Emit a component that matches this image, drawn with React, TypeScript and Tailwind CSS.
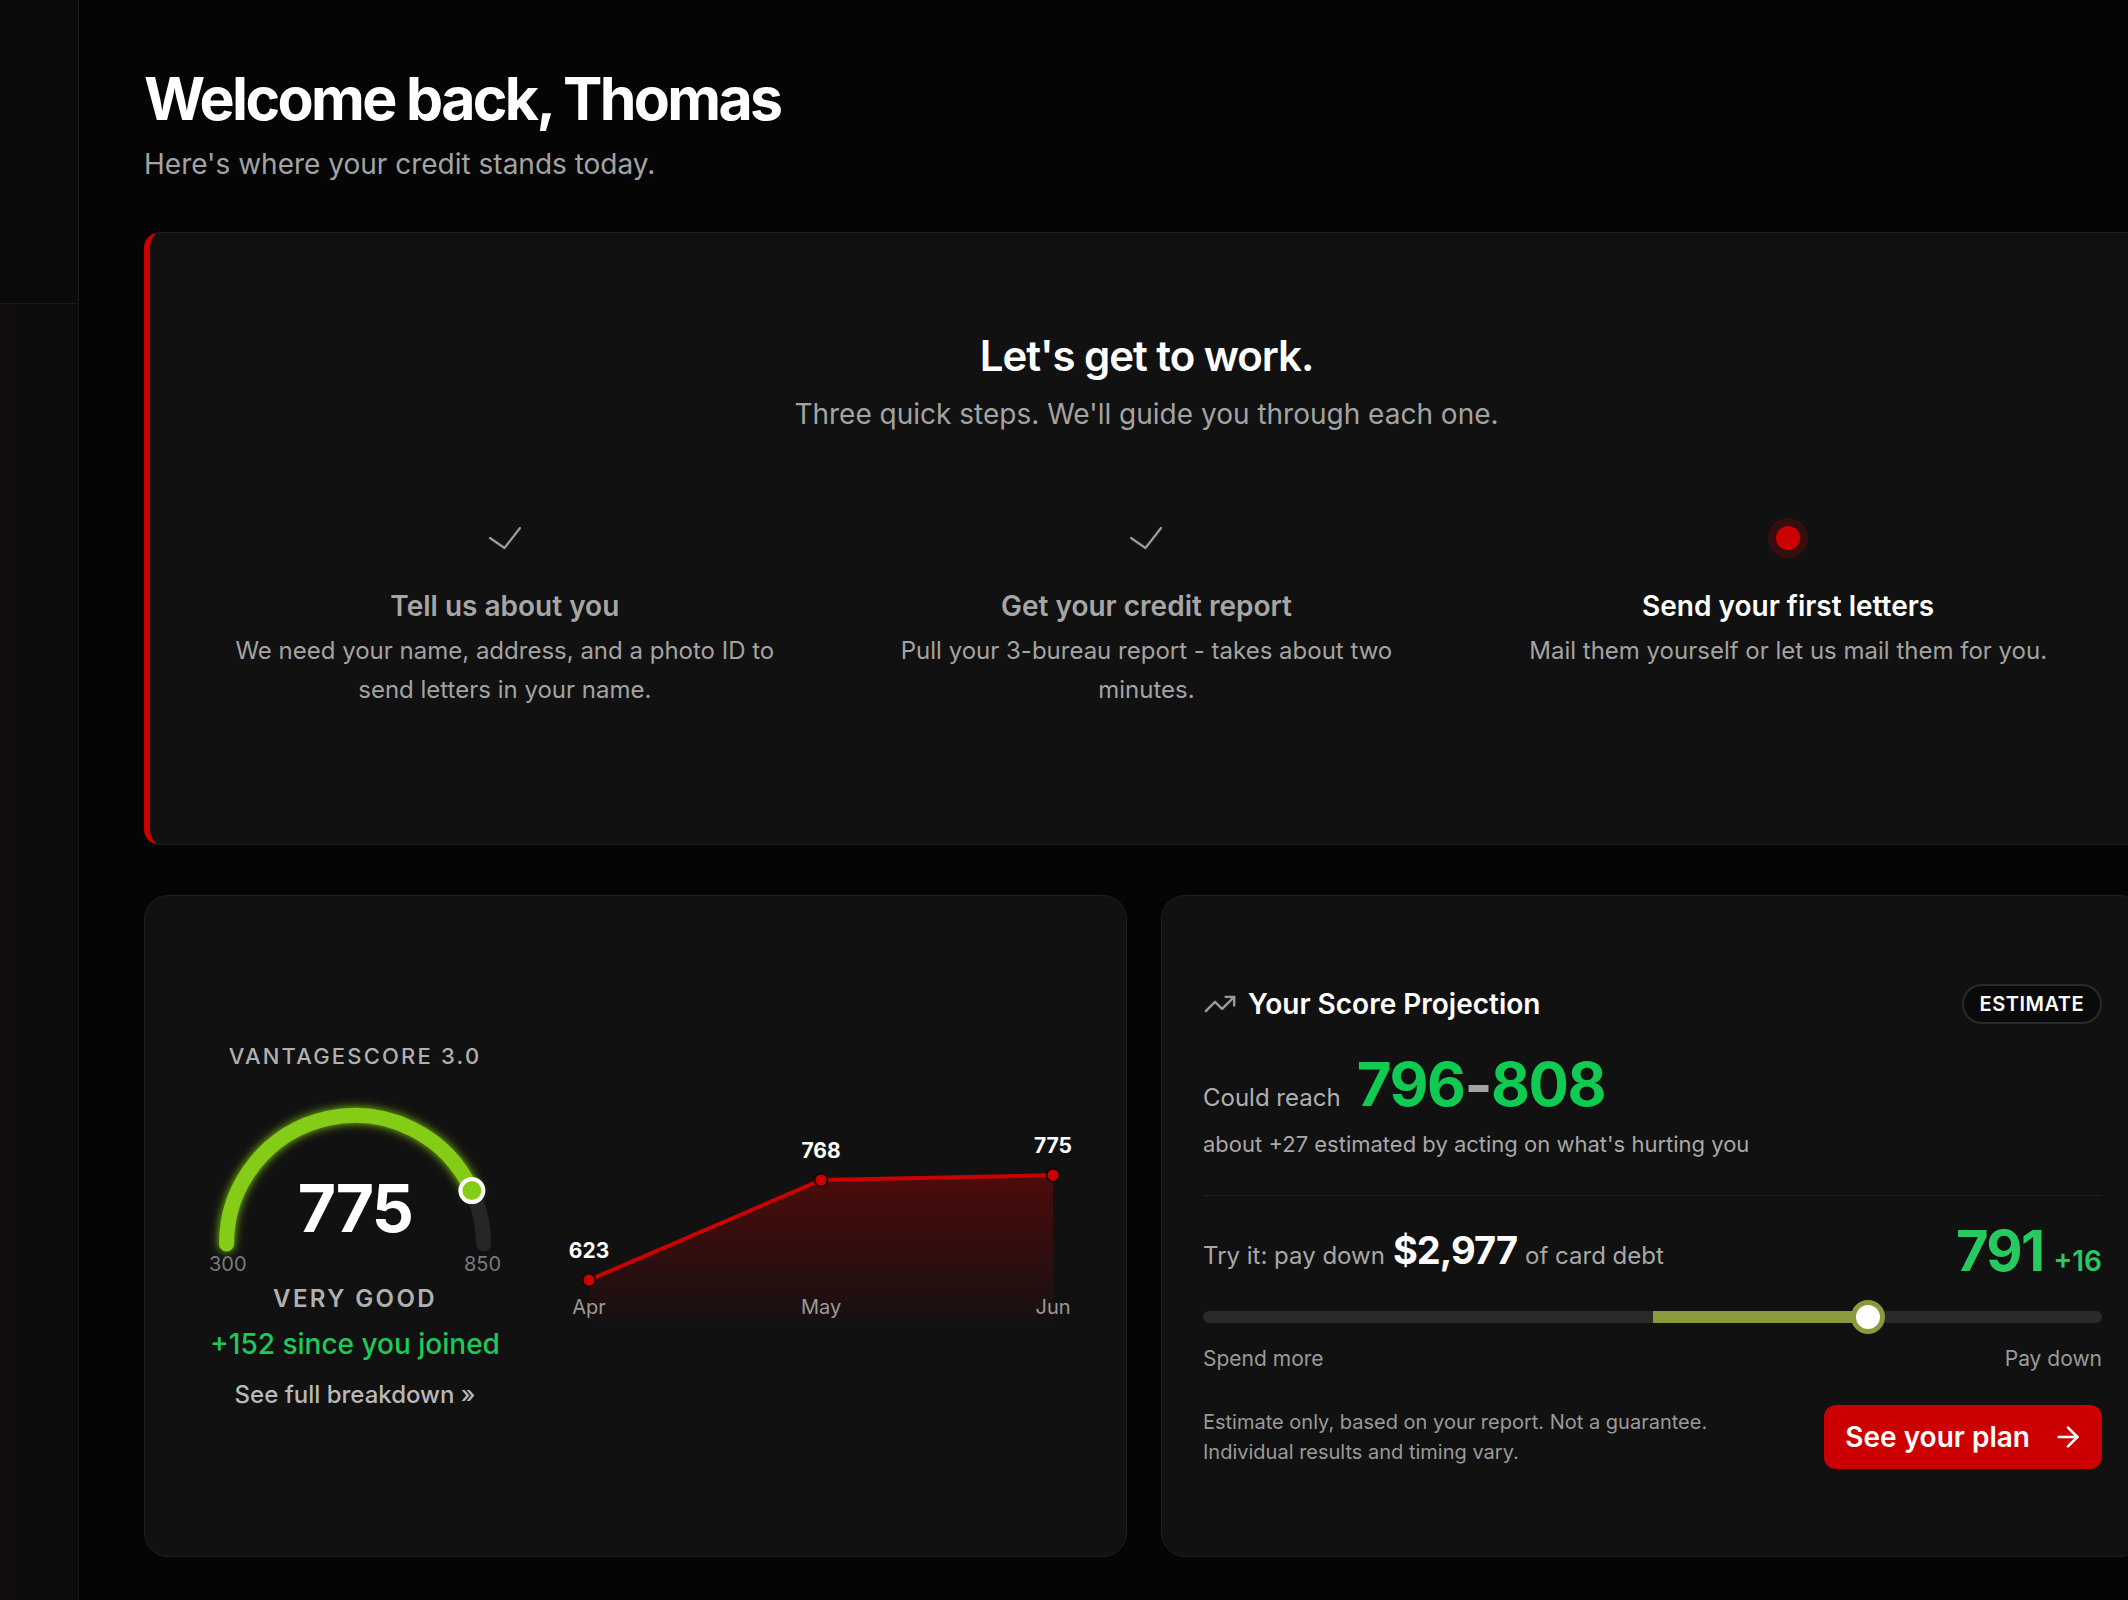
import { ArrowRight, TrendingUp } from 'lucide-react'

const STEPS = [
  {
    title: 'Tell us about you',
    body: 'We need your name, address, and a photo ID to send letters in your name.',
    done: true,
  },
  {
    title: 'Get your credit report',
    body: 'Pull your 3-bureau report - takes about two minutes.',
    done: true,
  },
  {
    title: 'Send your first letters',
    body: 'Mail them yourself or let us mail them for you.',
    done: false,
  },
]

const HISTORY = [
  { month: 'Apr', score: 623 },
  { month: 'May', score: 768 },
  { month: 'Jun', score: 775 },
]

const SCORE = 775
const SLIDER_VALUE = 0.74

function StepCheck() {
  return (
    <svg width="34" height="24" viewBox="0 0 34 24" fill="none">
      <polyline
        points="2,12 16.5,22 32,2"
        stroke="#9c9c9c"
        strokeWidth="2.2"
        strokeLinecap="round"
        strokeLinejoin="round"
      />
    </svg>
  )
}

function ScoreGauge({ score }: { score: number }) {
  const cx = 150
  const cy = 144
  const r = 128.5
  const t = (score - 300) / 550
  const angle = Math.PI * (1 - t)
  const kx = cx + r * Math.cos(angle)
  const ky = cy - r * Math.sin(angle)

  return (
    <div className="relative w-[300px] h-[156px]">
      <svg width="300" height="156" viewBox="0 0 300 156" className="overflow-visible">
        <defs>
          <filter id="gauge-glow" x="-20%" y="-20%" width="140%" height="140%">
            <feGaussianBlur stdDeviation="5" result="blur" />
            <feMerge>
              <feMergeNode in="blur" />
              <feMergeNode in="SourceGraphic" />
            </feMerge>
          </filter>
        </defs>
        <path
          d={`M ${cx - r} ${cy} A ${r} ${r} 0 0 1 ${cx + r} ${cy}`}
          stroke="#262626"
          strokeWidth="15"
          strokeLinecap="round"
          fill="none"
        />
        <path
          d={`M ${cx - r} ${cy} A ${r} ${r} 0 0 1 ${kx} ${ky}`}
          stroke="#84cc16"
          strokeWidth="15"
          strokeLinecap="round"
          fill="none"
          filter="url(#gauge-glow)"
        />
        <circle cx={kx} cy={ky} r="11.5" fill="#84cc16" stroke="#ffffff" strokeWidth="4" />
      </svg>
      <div className="absolute left-0 right-0 top-[75px] text-center text-[66px] leading-none font-bold tracking-tight text-white">
        {score}
      </div>
      <span className="absolute top-[150px] left-[4px] w-9 text-center text-[20px] leading-7 text-[#7a7a7a]">
        300
      </span>
      <span className="absolute top-[150px] left-[259px] w-9 text-center text-[20px] leading-7 text-[#7a7a7a]">
        850
      </span>
    </div>
  )
}

function HistoryChart() {
  const xs = [23, 255, 487]
  const pts = HISTORY.map((h, i) => ({ ...h, x: xs[i], y: 54 - (h.score - 768) * 0.69 }))
  const line = pts.map((p) => `${p.x},${p.y}`).join(' ')
  const area = `M ${pts[0].x} ${pts[0].y} ${pts
    .slice(1)
    .map((p) => `L ${p.x} ${p.y}`)
    .join(' ')} L ${pts[2].x} 196 L ${pts[0].x} 196 Z`

  return (
    <svg width="500" height="200" viewBox="0 0 500 200" className="shrink-0 overflow-visible">
      <defs>
        <linearGradient id="history-fill" x1="0" y1="0" x2="0" y2="1">
          <stop offset="0%" stopColor="#cc0000" stopOpacity="0.32" />
          <stop offset="100%" stopColor="#cc0000" stopOpacity="0.03" />
        </linearGradient>
      </defs>
      <path d={area} fill="url(#history-fill)" />
      <polyline
        points={line}
        fill="none"
        stroke="#cc0000"
        strokeWidth="4"
        strokeLinejoin="round"
        strokeLinecap="round"
      />
      {pts.map((p) => (
        <g key={p.month}>
          <circle cx={p.x} cy={p.y} r="6.5" fill="#cc0000" stroke="#1a0606" strokeWidth="2" />
          <text
            x={p.x}
            y={p.y - 22}
            textAnchor="middle"
            fill="#ffffff"
            fontFamily="Inter, sans-serif"
            fontWeight="700"
            fontSize="21"
          >
            {p.score}
          </text>
          <text
            x={p.x}
            y="188"
            textAnchor="middle"
            fill="#9a9a9a"
            fontFamily="Inter, sans-serif"
            fontSize="20"
          >
            {p.month}
          </text>
        </g>
      ))}
    </svg>
  )
}

function ProgressCard() {
  return (
    <section className="h-[613px] rounded-2xl border border-[#1f1f1f] border-l-[6px] border-l-[#cc0000] bg-[#111111] px-[34px] pt-[98px]">
      <h2 className="text-center text-[42px] leading-[50px] font-semibold tracking-tight text-white">
        Let's get to work.
      </h2>
      <p className="mt-[13px] text-center text-[28px] leading-10 text-[#a3a3a3]">
        Three quick steps. We'll guide you through each one.
      </p>
      <div className="mt-[84px] grid grid-cols-3">
        {STEPS.map((step) => (
          <div key={step.title} className="flex flex-col items-center px-8 text-center">
            <div className="flex h-10 items-center justify-center">
              {step.done ? (
                <StepCheck />
              ) : (
                <span className="h-6 w-6 rounded-full bg-[#cc0000] ring-8 ring-[#cc0000]/20" />
              )}
            </div>
            <h3
              className={`mt-[28px] text-[28px] leading-10 font-semibold ${
                step.done ? 'text-[#a6a6a6]' : 'text-white'
              }`}
            >
              {step.title}
            </h3>
            <p className="mt-[5px] text-[24px] leading-[39px] text-[#a3a3a3]">{step.body}</p>
          </div>
        ))}
      </div>
    </section>
  )
}

function ScoreCard() {
  return (
    <section className="flex h-[662px] items-center justify-center gap-[61px] rounded-3xl border border-[#1f1f1f] bg-[#111111]">
      <div className="flex w-[300px] flex-col items-center">
        <div className="text-[22px] leading-7 font-medium tracking-[0.1em] text-[#b0b0b0]">
          VANTAGESCORE 3.0
        </div>
        <div className="mt-[30px]">
          <ScoreGauge score={SCORE} />
        </div>
        <div className="mt-[27px] text-[24px] leading-8 font-semibold tracking-[0.1em] text-[#b0b0b0]">
          VERY GOOD
        </div>
        <div className="mt-[11px] text-[28px] leading-9 font-medium text-[#1ec95a]">
          +152 since you joined
        </div>
        <a href="#" className="mt-[17px] text-[24px] leading-8 font-medium text-[#b8b8b8]">
          See full breakdown »
        </a>
      </div>
      <HistoryChart />
    </section>
  )
}

function ProjectionCard() {
  return (
    <section className="flex h-[662px] flex-col justify-center rounded-3xl border border-[#1f1f1f] bg-[#111111] px-[41px]">
      <div className="flex items-center justify-between">
        <div className="flex items-center gap-[11px]">
          <TrendingUp size={34} strokeWidth={1.7} className="text-[#9a9a9a]" />
          <h3 className="text-[28px] leading-9 font-semibold text-white">Your Score Projection</h3>
        </div>
        <span className="flex h-10 items-center rounded-full border-2 border-[#2a2a2a] bg-[#0a0a0a] px-[16px] text-[20px] font-semibold tracking-wide text-white">
          ESTIMATE
        </span>
      </div>

      <div className="mt-[30px] flex items-baseline gap-[16px]">
        <span className="text-[24px] text-[#b0b0b0]">Could reach</span>
        <span className="text-[60px] leading-none font-bold tracking-tight text-[#0fcb52]">
          796<span className="text-[#a3a3a3]">-</span>808
        </span>
      </div>
      <p className="mt-[12px] text-[22px] leading-8 text-[#a8a8a8]">
        about +27 estimated by acting on what's hurting you
      </p>

      <div className="mt-[35px] border-t border-[#1f1f1f]" />

      <div className="mt-[27px] flex items-center justify-between">
        <div className="flex items-baseline gap-[8px] text-[24px] text-[#a8a8a8]">
          <span>Try it: pay down</span>
          <span className="text-[38px] leading-none font-bold tracking-tight text-white">$2,977</span>
          <span>of card debt</span>
        </div>
        <div className="flex items-baseline gap-[10px]">
          <span className="text-[56px] leading-none font-bold tracking-[-0.03em] text-[#28c95e]">791</span>
          <span className="text-[28px] font-semibold text-[#28c95e]">+16</span>
        </div>
      </div>

      <div className="relative mt-[29px] h-3 rounded-full bg-[#2a2a2a]">
        <div
          className="absolute top-0 h-3 bg-[#8a9a3c]"
          style={{ left: '50%', width: `${(SLIDER_VALUE - 0.5) * 100}%` }}
        />
        <div
          className="absolute top-1/2 h-[34px] w-[34px] -translate-x-1/2 -translate-y-1/2 rounded-full border-[5px] border-[#8a9a3c] bg-white"
          style={{ left: `${SLIDER_VALUE * 100}%` }}
        />
      </div>
      <div className="mt-[22px] flex justify-between text-[21px] leading-7 text-[#9a9a9a]">
        <span>Spend more</span>
        <span>Pay down</span>
      </div>

      <div className="mt-[32px] flex items-center justify-between">
        <p className="text-[20px] leading-[30px] text-[#9a9a9a]">
          Estimate only, based on your report. Not a guarantee.
          <br />
          Individual results and timing vary.
        </p>
        <button
          type="button"
          className="flex h-16 items-center gap-[22px] rounded-xl bg-[#cc0000] pl-[21px] pr-[18px] text-[28px] font-semibold text-white"
        >
          See your plan
          <ArrowRight size={32} strokeWidth={2} />
        </button>
      </div>
    </section>
  )
}

export default function App() {
  return (
    <div className="flex h-[1600px] w-[2128px] overflow-hidden bg-[#050505] font-['Inter','Noto_Sans',sans-serif]">
      <aside className="flex w-[79px] shrink-0 flex-col border-r border-[#1a1a1a] bg-[#0b0b0b]">
        <div className="h-[304px] border-b border-[#1c1c1c]" />
        <div className="flex-1 bg-gradient-to-r from-[#100d0b] to-[#0c0c0c]" />
      </aside>

      <main className="flex-1 pl-[65px] pt-[67px]">
        <div className="w-[2000px]">
          <h1 className="text-[59px] leading-[64px] font-bold tracking-[-0.045em] text-white">
            Welcome back, Thomas
          </h1>
          <p className="mt-[15px] text-[28px] leading-9 text-[#a3a3a3]">
            Here's where your credit stands today.
          </p>

          <div className="mt-[50px]">
            <ProgressCard />
          </div>

          <div className="mt-[50px] grid grid-cols-2 gap-[34px]">
            <ScoreCard />
            <ProjectionCard />
          </div>
        </div>
      </main>
    </div>
  )
}
